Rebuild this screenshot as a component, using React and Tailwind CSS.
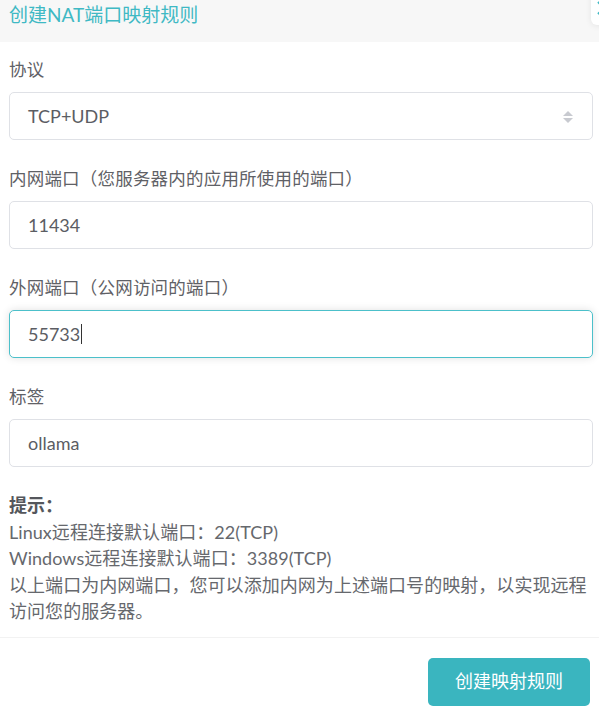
import React from "react";

const font = { fontFamily: '"Lato", "Noto Sans CJK SC", sans-serif' };

function Label({ children }) {
  return (
    <div className="h-[24px] leading-[24px] text-[17.5px] tracking-[0.2px] text-[#5f6166] mb-[10px] [text-spacing-trim:space-all]">
      {children}
    </div>
  );
}

function Box({ children, focused }) {
  return (
    <div
      className={
        "relative h-[48px] rounded-[5px] border bg-white flex items-center pl-[18px] pr-[18px] text-[18px] text-[#5b5d63] " +
        (focused
          ? "border-[#4cc0ca] shadow-[0_0_8px_rgba(0,0,0,0.12)]"
          : "border-[#dfe1e6]")
      }
    >
      {children}
    </div>
  );
}

export default function App() {
  return (
    <div className="relative w-[599px] h-[706px] bg-white overflow-hidden" style={font}>
      {/* header */}
      <div className="h-[42px] bg-[#f7f7f7] pl-[9px] pt-[2px]">
        <div className="text-[19px] leading-[26px] text-[#3fb9c4]">创建NAT端口映射规则</div>
      </div>

      {/* close widget partially visible */}
      <div className="absolute left-[591px] top-[-10px] w-[30px] h-[35px] rounded-[6px] bg-white shadow-[0_1px_6px_rgba(0,0,0,0.08)]">
        <svg className="absolute left-[6px] top-[11px]" width="14" height="14" viewBox="0 0 14 14">
          <path d="M1 1 L13 13 M13 1 L1 13" stroke="#3fb9c4" strokeWidth="2" />
        </svg>
      </div>

      <div className="pl-[9px] pr-[6px] pt-[16px]">
        <div className="flex flex-col gap-[27px]">
          <div>
            <Label>协议</Label>
            <Box>
              <span>TCP+UDP</span>
              <svg className="absolute right-[18px] top-[17px]" width="12" height="14" viewBox="0 0 12 14">
                <path d="M6 1 L11 6 L1 6 Z" fill="#c8cad0" />
                <path d="M6 13 L11 8 L1 8 Z" fill="#c8cad0" />
              </svg>
            </Box>
          </div>
          <div>
            <Label>内网端口（您服务器内的应用所使用的端口）</Label>
            <Box>
              <span>11434</span>
            </Box>
          </div>
          <div>
            <Label>外网端口（公网访问的端口）</Label>
            <Box focused>
              <span>55733</span>
              <span className="inline-block w-[1px] h-[20px] bg-[#333] ml-[1px]"></span>
            </Box>
          </div>
          <div>
            <Label>标签</Label>
            <Box>
              <span>ollama</span>
            </Box>
          </div>
        </div>

        <div className="mt-[25px] mr-[-6px] text-[18px] leading-[26.5px] tracking-[0.05px] text-[#66686d] [text-spacing-trim:space-all]">
          <div className="font-bold text-[#55575c]">提示：</div>
          <div>Linux远程连接默认端口：22(TCP)</div>
          <div>Windows远程连接默认端口：3389(TCP)</div>
          <div>以上端口为内网端口，您可以添加内网为上述端口号的映射，以实现远程访问您的服务器。</div>
        </div>
      </div>

      <div className="mt-[12px] h-[1px] bg-[#f2f2f2]"></div>

      <div className="flex justify-end pr-[9px] pt-[20px]">
        <div className="w-[162px] h-[48px] rounded-[5px] bg-[#3ab5bf] text-white text-[18px] flex items-center justify-center">
          创建映射规则
        </div>
      </div>
    </div>
  );
}
